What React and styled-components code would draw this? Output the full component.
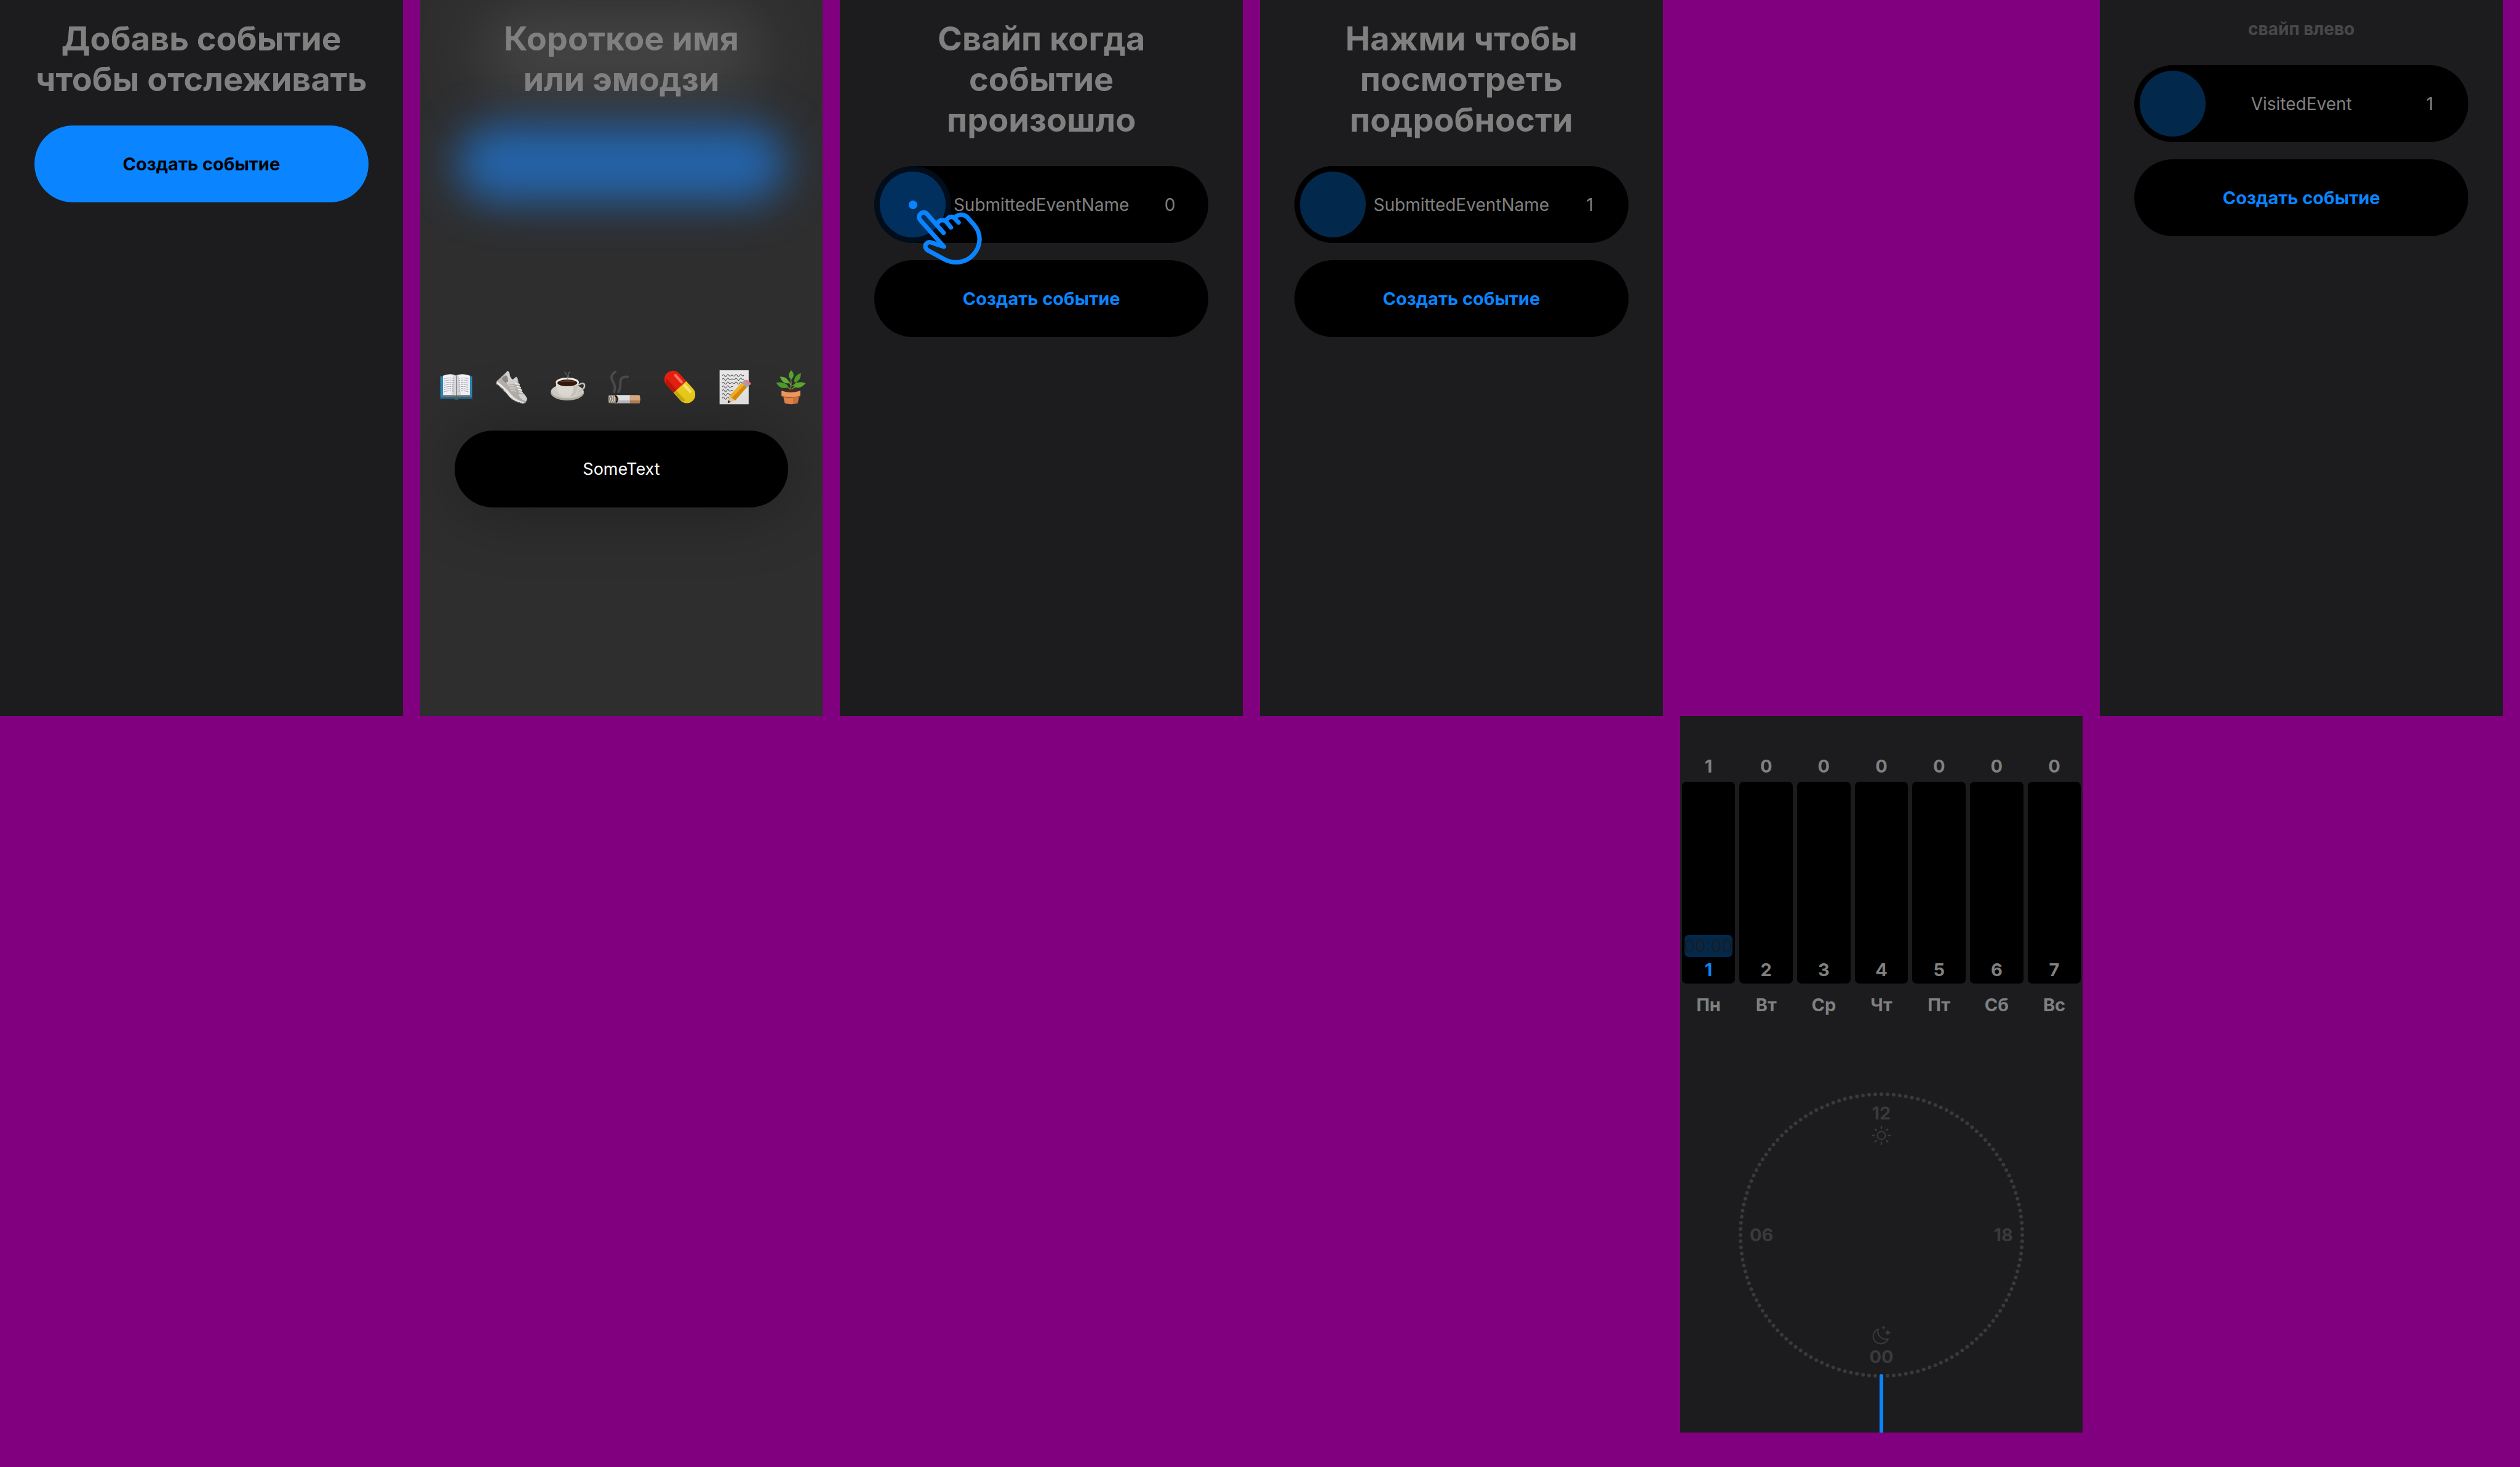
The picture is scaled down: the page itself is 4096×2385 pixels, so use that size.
import React from "react";
import styled, { createGlobalStyle } from "styled-components";

const color = {
  page: "#800080",
  screen: "#1c1c1e",
  blue: "#0a84ff",
  navy: "#02284c",
  gray: "#808080",
  hint: "#48484a",
  dial: "#3a3a3c",
};

const GlobalStyle = createGlobalStyle`
  *, *::before, *::after { box-sizing: border-box; }
  body {
    margin: 0;
    background: ${color.page};
    font-family: Inter, "Noto Sans", sans-serif;
    font-size: 28px;
  }
  button, input { font: inherit; }
`;

const Board = styled.main`
  display: grid;
  grid-template-columns: repeat(6, minmax(0, 1fr));
  column-gap: 28px;
  padding: 0 28px 56px 0;
`;

const Screen = styled.section`
  position: relative;
  grid-column: ${(p) => p.$column};
  grid-row: ${(p) => p.$row || 1};
  aspect-ratio: 750 / 1334;
  display: flex;
  flex-direction: column;
  padding: ${(p) => p.$padding || "30px 56px 0"};
  background: ${(p) => p.$background || color.screen};
  overflow: hidden;
`;

const Title = styled.h1`
  position: relative;
  margin: 0 -28px 42px;
  color: ${color.gray};
  font-size: 54px;
  font-weight: 700;
  line-height: 66px;
  text-align: center;
`;

const Hint = styled.p`
  margin: 0 0 42px;
  color: ${color.hint};
  font-size: 28px;
  font-weight: 700;
  line-height: 34px;
  text-align: center;
`;

const Stack = styled.div`
  display: flex;
  flex-direction: column;
  gap: 28px;
`;

const CreateButton = styled.button`
  height: 125px;
  border: 0;
  border-radius: 63px;
  background: ${(p) => (p.$primary ? color.blue : "#000")};
  color: ${(p) => (p.$primary ? "#000" : color.blue)};
  font-size: 29px;
  font-weight: 700;
  cursor: pointer;
`;

const Row = styled.article`
  position: relative;
  display: grid;
  grid-template-columns: 107px 1fr 107px;
  align-items: center;
  height: 125px;
  padding: 9px;
  border-radius: 63px;
  background: #000;
  color: ${color.gray};
  text-align: center;
`;

const Knob = styled.button`
  width: 107px;
  height: 107px;
  padding: 0;
  border: 0;
  border-radius: 50%;
  background: ${color.navy};
`;

const Touch = styled.div`
  position: absolute;
  top: 0;
  left: 0;
  display: grid;
  place-items: center;
  width: 125px;
  height: 125px;
  border-radius: 50%;
  background: rgba(10, 132, 255, 0.1);
  pointer-events: none;
`;

const TouchDot = styled.span`
  width: 14px;
  height: 14px;
  border-radius: 50%;
  background: ${color.blue};
`;

const HandIcon = styled.svg`
  position: absolute;
  z-index: 1;
  top: 44px;
  left: 54px;
  width: 140px;
  height: 122px;
  fill: none;
  stroke: ${color.blue};
  stroke-width: 25;
  stroke-linecap: round;
  stroke-linejoin: round;
  pointer-events: none;
`;

function Hand() {
  return (
    <HandIcon viewBox="0 0 480 420" aria-hidden="true">
      <path d="M201 222 L109 117 C97 104 81 107 72 115 C62 124 60 138 70 150 L203 300 L131 276 C117 271 104 279 100 291 C97 302 102 314 113 320 L205 370 C255 399 325 391 366 346 C412 296 415 228 371 177 L335 136 C318 117 288 116 270 131" />
      <path d="M168 166 C181 146 206 147 218 162 L242 192" />
      <path d="M220 146 C233 129 252 129 263 141 L285 164" />
    </HandIcon>
  );
}

function EventRow({ name, count, touched }) {
  return (
    <Row>
      <Knob type="button" aria-label={name} />
      <span>{name}</span>
      <span>{count}</span>
      {touched && (
        <>
          <Touch>
            <TouchDot />
          </Touch>
          <Hand />
        </>
      )}
    </Row>
  );
}

const Glow = styled.div`
  position: absolute;
  top: ${(p) => p.$top}px;
  left: ${(p) => p.$side}px;
  right: ${(p) => p.$side}px;
  height: ${(p) => p.$height}px;
  border-radius: 63px;
  background: ${(p) => p.$color};
  filter: blur(${(p) => p.$blur}px);
`;

const EmojiBar = styled.div`
  position: relative;
  display: flex;
  justify-content: space-between;
  margin: 398px -33px 42px -25px;
`;

const EmojiButton = styled.button`
  width: 56px;
  height: 56px;
  padding: 0;
  border: 0;
  background: none;

  svg {
    display: block;
    width: 100%;
    height: 100%;
    overflow: visible;
  }
`;

const NameInput = styled.input`
  position: relative;
  width: 100%;
  height: 125px;
  padding: 0 56px;
  border: 0;
  border-radius: 63px;
  background: #000;
  box-shadow: 0 0 112px rgba(0, 0, 0, 0.33);
  color: #fff;
  font-size: 27px;
  text-align: center;
  outline: none;
`;

const lines = [16, 20, 24, 28, 32, 36, 40];

const emojis = [
  {
    label: "Книга",
    art: (
      <>
        <path d="M2 11h59v42H37q-5 3-10 0H2z" fill="#2f86b5" />
        <path d="M2 50h59v3H37q-5 3-10 0H2z" fill="#1b6490" />
        <path d="M6 46h52v4H6z" fill="#77756f" />
        <path d="M7 10q15-6 24 0q10-6 26 0v36H7z" fill="#f3f3f8" />
        <path d="M26 8q4 0 5 3v36q-3-2-8-1zM36 8q-4 0-4 3v36q3-2 8-1z" fill="#c9c9d0" opacity=".7" />
        <path d="M31.5 10v38" stroke="#55555c" strokeWidth="1.2" />
        {lines.map((y) => (
          <path key={y} d={`M9 ${y}q9-3 18-1M36 ${y - 1}q9-2 18 1`} stroke="#8d8d98" strokeWidth="1" strokeDasharray="3 1 5 1" fill="none" />
        ))}
        <path d="M27 50q5-4 10 0q-5 4-10 0z" fill="#6b6a2a" />
      </>
    ),
  },
  {
    label: "Кроссовок",
    art: (
      <>
        <path d="M4 20L24 1Q28 3 28 9Q30 16 34 17L40 12Q44 14 44 22L51 40Q61 49 60 55L57 61L49 61L4 25z" fill="#b7b2ae" />
        <path d="M24 1Q28 3 28 9Q30 16 34 17L40 12L43 24L24 27L17 12z" fill="#d6d3d0" />
        <path d="M21 9q4 2 4 12l-5 2q-7-5-6-9z" fill="#8f8a86" />
        <path d="M44 45q9-3 14 4q4 5 0 8q-8 0-14-12z" fill="#dedddb" />
        <path d="M4 20Q20 32 30 44T55 59L53 62Q36 60 24 46T3 26z" fill="#ededec" />
        <path d="M4 26Q14 33 24 46T50 61" stroke="#47423f" strokeWidth="1.6" fill="none" strokeDasharray="2 1" />
        <path d="M25 29l11-1M28 33l11 0M30 37l10 2" stroke="#e5e3e1" strokeWidth="1.4" />
        <path d="M38 25l9 1M41 30l8 2M43 35l8 2M45 40l7 1" stroke="#fff" strokeWidth="2" />
      </>
    ),
  },
  {
    label: "Кофе",
    art: (
      <>
        <ellipse cx="31" cy="41" rx="31" ry="15" fill="#b9b5ac" />
        <ellipse cx="31" cy="39" rx="30" ry="13" fill="#d6d3cb" />
        <path d="M52 27q10-6 11 1t-13 12" stroke="#c9c6be" strokeWidth="3" fill="none" />
        <path d="M10 22h42q1 27-16 27h-9Q10 49 10 22z" fill="#e3e0d8" />
        <path d="M42 28h9q-2 20-15 21q7-6 6-21z" fill="#bdb9b0" opacity=".6" />
        <ellipse cx="31" cy="22" rx="21.5" ry="8.5" fill="#f2f0ec" />
        <ellipse cx="31" cy="23.5" rx="18.5" ry="6.3" fill="#351a0d" />
        <path d="M15 22q16-7 32 0q-15-2-32 0z" fill="#6d4328" />
        <path d="M26 3q3 4 5 7t-1 8M36 3q-4 2-3 6t-2 8" stroke="#8a8a8a" strokeWidth="1.5" fill="none" opacity=".6" />
      </>
    ),
  },
  {
    label: "Сигарета",
    art: (
      <>
        <path d="M16 3C-2 16 21 22 14 40M39 12C17 12 31 27 22 40" stroke="#707072" strokeWidth="4.5" strokeLinecap="round" fill="none" opacity=".45" />
        <rect x="14" y="46" width="30" height="15" fill="#e9ebf0" />
        <path d="M43 46h18q3 7 0 15H43z" fill="#e0b083" />
        <path d="M43 56h19l-1 5H43z" fill="#b98654" />
        <path d="M14 56h29v5H14z" fill="#bfc1c9" />
        <path d="M4 46q9-1 14 1l3 7-4 7H4q-3-8 0-15z" fill="#8b8378" />
        <path d="M5 48l3 5-3 6M10 47l2 6-3 7M14 48l1 6-2 6" stroke="#e8e3d8" strokeWidth="1.5" fill="none" />
        <path d="M16 47q7 5 2 13" stroke="#241309" strokeWidth="3" fill="none" />
        <path d="M20 49q3 5 0 9" stroke="#a36a1d" strokeWidth="1.2" fill="none" />
      </>
    ),
  },
  {
    label: "Таблетка",
    art: (
      <g transform="rotate(48 32 31)">
        <path d="M32 15H13a16 16 0 0 0 0 32h19z" fill="#e8200f" />
        <path d="M32 15h19a16 16 0 0 1 0 32H32z" fill="#f2d11c" />
        <path d="M32 40h26q-3 7-9 7H32z" fill="#b99a08" opacity=".6" />
        <path d="M4 39h28v8H13q-6-1-9-8z" fill="#a90f08" opacity=".6" />
        <rect x="8" y="20" width="22" height="5" rx="2.5" fill="#ff8a74" opacity=".8" />
        <rect x="34" y="20" width="20" height="5" rx="2.5" fill="#fff29a" opacity=".8" />
      </g>
    ),
  },
  {
    label: "Заметка",
    art: (
      <>
        <path d="M3 0h54v63H3z" fill="#e9e9e9" />
        {[10, 17, 24, 31, 38, 45, 52].map((y, i) => (
          <path key={y} d={`M8 ${y}q2-4 4 0t4 0t4-1t4 1t4 0${i < 3 ? "t4-1t4 1t4 0t4-1t4 0" : ""}`} stroke="#5b5b5f" strokeWidth="1.2" fill="none" />
        ))}
        <path d="M20 60l5-2 33-33-3-2z" fill="#000" opacity=".2" />
        <path d="M21 48L44 23l10 8L32 56z" fill="#f7b521" />
        <path d="M25 52L49 27l5 4L32 56z" fill="#dc8e10" />
        <path d="M21 48l11 8-13 4z" fill="#f0cf9d" />
        <path d="M18 61l1-6 5 4z" fill="#333" />
        <path d="M44 23l4-4 10 8-4 5z" fill="#9fa9b5" />
        <path d="M48 19q4-3 9 1t4 6l-3 2z" fill="#e87e8b" />
      </>
    ),
  },
  {
    label: "Растение",
    art: (
      <>
        <path d="M31 38q2-14 0-28M31 30q8-2 12-10M31 28q-2-8-9-10M31 36q6-4 14-8M31 36q-6-6-14-8" stroke="#6f9a35" strokeWidth="1.6" fill="none" />
        <path d="M32 0q9 9 0 17q-9-7 0-17z" fill="#59a52c" />
        <path d="M50 5q0 16-12 17q-2-12 12-17z" fill="#4d9a26" />
        <path d="M11 12q15-1 17 12q-12 2-17-12z" fill="#66ad35" />
        <path d="M4 23q18-3 23 8q-14 7-23-8z" fill="#509b27" />
        <path d="M59 24q-16-6-23 6q12 7 23-6z" fill="#5ba62d" />
        <ellipse cx="32" cy="39" rx="17" ry="3.5" fill="#4c2b1b" />
        <path d="M17 47h30l-3 14q-12 4-24 0z" fill="#e2854b" />
        <path d="M36 47h11l-3 14-9 2z" fill="#b95f2c" opacity=".5" />
        <path d="M14 38q17 6 35 0v10q-17 6-35 0z" fill="#ee9a60" />
        <path d="M14 47q17 6 35 0v1q-17 7-34 1z" fill="#a6532a" />
      </>
    ),
  },
];

const Week = styled.ol`
  display: grid;
  grid-template-columns: repeat(7, 1fr);
  column-gap: 7px;
  margin: 0 0 124px;
  padding: 0;
  list-style: none;
  color: ${color.gray};
  font-size: 29px;
  font-weight: 700;
  line-height: 36px;
  text-align: center;
`;

const Day = styled.li`
  display: flex;
  flex-direction: column;
`;

const Bar = styled.div`
  display: flex;
  flex-direction: column;
  justify-content: flex-end;
  gap: 3px;
  height: 328px;
  margin: 7px 0 17px;
  padding: 4px;
  border-radius: 7px;
  background: #000;
  color: ${(p) => (p.$today ? color.blue : "inherit")};
`;

const Mark = styled.time`
  border-radius: 7px;
  background: ${color.navy};
  color: ${color.screen};
  font-size: 28px;
  font-weight: 400;
`;

const Dial = styled.div`
  position: relative;
  flex: none;
  align-self: center;
  display: flex;
  flex-direction: column;
  justify-content: space-between;
  width: 464px;
  height: 464px;
  padding: 18px;
  color: ${color.dial};
  font-size: 29px;
  font-weight: 700;
  line-height: 32px;
`;

const DialEnd = styled.div`
  display: flex;
  flex-direction: column;
  align-items: center;
  gap: 4px;
`;

const DialSides = styled.div`
  display: flex;
  justify-content: space-between;
`;

const Ring = styled.svg`
  position: absolute;
  inset: 0;
  width: 100%;
  height: 100%;
  fill: ${color.dial};
`;

const DialIcon = styled.svg`
  width: 32px;
  height: 32px;
  fill: none;
  stroke: ${color.dial};
  stroke-width: 2;
  stroke-linecap: round;
  stroke-linejoin: round;
`;

const Hour = styled.div`
  position: relative;
  flex: 1;
  align-self: center;
  width: 6px;
  margin-top: -6px;
  border-radius: 3px 3px 0 0;
  background: ${color.blue};
`;

const dots = Array.from({ length: 144 }, (_, i) => {
  const a = (i / 144) * Math.PI * 2;
  return [232 + 229 * Math.sin(a), 232 - 229 * Math.cos(a)];
});

const rays = [0, 45, 90, 135, 180, 225, 270, 315];

const week = [
  ["Пн", 1],
  ["Вт", 0],
  ["Ср", 0],
  ["Чт", 0],
  ["Пт", 0],
  ["Сб", 0],
  ["Вс", 0],
];

export default function App() {
  return (
    <>
      <GlobalStyle />
      <Board>
        <Screen $column={1}>
          <Title>
            Добавь событие
            <br />
            чтобы отслеживать
          </Title>
          <Stack>
            <CreateButton type="button" $primary>Создать событие</CreateButton>
          </Stack>
        </Screen>

        <Screen $column={2} $background="#2e2e2f">
          <Glow $top={16} $side={100} $height={140} $blur={48} $color="#444444" />
          <Glow $top={203} $side={60} $height={125} $blur={34} $color="#2464aa" />
          <Title>
            Короткое имя
            <br />
            или эмодзи
          </Title>
          <EmojiBar>
            {emojis.map((e) => (
              <EmojiButton key={e.label} type="button" aria-label={e.label}>
                <svg viewBox="0 0 64 64" aria-hidden="true">{e.art}</svg>
              </EmojiButton>
            ))}
          </EmojiBar>
          <NameInput type="text" aria-label="Имя события" defaultValue="SomeText" />
        </Screen>

        <Screen $column={3}>
          <Title>
            Свайп когда
            <br />
            событие
            <br />
            произошло
          </Title>
          <Stack>
            <EventRow name="SubmittedEventName" count={0} touched />
            <CreateButton type="button">Создать событие</CreateButton>
          </Stack>
        </Screen>

        <Screen $column={4}>
          <Title>
            Нажми чтобы
            <br />
            посмотреть
            <br />
            подробности
          </Title>
          <Stack>
            <EventRow name="SubmittedEventName" count={1} />
            <CreateButton type="button">Создать событие</CreateButton>
          </Stack>
        </Screen>

        <Screen $column={5} $row={2} $padding="64px 3px 0">
          <Week>
            {week.map(([name, count], i) => (
              <Day key={name}>
                <span>{count}</span>
                <Bar $today={i === 0}>
                  {count > 0 && <Mark>00:00</Mark>}
                  <span>{i + 1}</span>
                </Bar>
                <span>{name}</span>
              </Day>
            ))}
          </Week>
          <Dial>
            <Ring viewBox="0 0 464 464" aria-hidden="true">
              {dots.map(([x, y], i) => (
                <circle key={i} cx={x} cy={y} r="3" />
              ))}
            </Ring>
            <DialEnd>
              <span>12</span>
              <DialIcon viewBox="0 0 32 32" aria-hidden="true">
                <circle cx="16" cy="16" r="6.5" />
                {rays.map((r) => (
                  <path key={r} d="M16 1.5v3" strokeWidth="2.5" transform={`rotate(${r} 16 16)`} />
                ))}
              </DialIcon>
            </DialEnd>
            <DialSides>
              <span>06</span>
              <span>18</span>
            </DialSides>
            <DialEnd>
              <DialIcon viewBox="0 0 32 32" aria-hidden="true">
                <path d="M11 7 C8 16 16 25 27 23 C24 30 14 33 7 28 C0 22 2 10 11 7 Z" />
                <path d="M26.5 6.5 Q27 11.5 32 12.5 Q27 13.5 26.5 18 Q26 13.5 21 12.5 Q26 11.5 26.5 6.5 ZM19.5 1 Q20 4 23 4.5 Q20 5 19.5 8 Q19 5 16 4.5 Q19 4 19.5 1 Z" fill={color.dial} stroke="none" />
              </DialIcon>
              <span>00</span>
            </DialEnd>
          </Dial>
          <Hour />
        </Screen>

        <Screen $column={6}>
          <Hint>свайп влево</Hint>
          <Stack>
            <EventRow name="VisitedEvent" count={1} />
            <CreateButton type="button">Создать событие</CreateButton>
          </Stack>
        </Screen>
      </Board>
    </>
  );
}
